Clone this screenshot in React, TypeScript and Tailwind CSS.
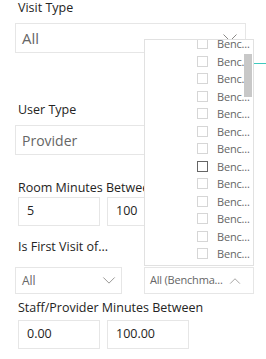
import React from 'react';

const font = { fontFamily: '"Segoe UI", "Open Sans", "Noto Sans", sans-serif' };

const ChevronDown = ({ className }: { className?: string }) => (
  <svg viewBox="0 0 14 8" className={className} fill="none" stroke="#8a8886" strokeWidth={1}>
    <path d="M0.5 0.5L7 7L13.5 0.5" />
  </svg>
);

const ChevronUp = ({ className }: { className?: string }) => (
  <svg viewBox="0 0 14 8" className={className} fill="none" stroke="#8a8886" strokeWidth={1}>
    <path d="M0.5 7.5L7 1L13.5 7.5" />
  </svg>
);

const Label = ({ children, className = '' }: { children: React.ReactNode; className?: string }) => (
  <div className={`pl-[18px] h-[18px] leading-[18px] text-[12.5px] text-[#252423] whitespace-nowrap ${className}`}>
    {children}
  </div>
);

const NumberBox = ({ value }: { value: string }) => (
  <div className="w-[82px] h-[29px] border border-[#e6e6e6] flex items-center pl-[8px] text-[12.5px] text-[#252423] bg-white">
    {value}
  </div>
);

const items = Array.from({ length: 13 }, (_, i) => i);

export default function App() {
  return (
    <div className="relative w-[266px] h-[359px] overflow-hidden bg-white" style={font}>
      {/* Visit Type */}
      <Label className="-mt-[1px]">Visit Type</Label>
      <div className="ml-[15px] mt-[6px] w-[231px] h-[30px] border border-[#e6e6e6] flex items-center justify-between pl-[6px] pr-[8px]">
        <span className="text-[15px] text-[#666666]">All</span>
        <ChevronDown className="w-[14px] h-[8px]" />
      </div>

      {/* User Type */}
      <Label className="mt-[48px]">User Type</Label>
      <div className="ml-[15px] mt-[6px] w-[231px] h-[30px] border border-[#e6e6e6] flex items-center pl-[6px]">
        <span className="text-[14px] text-[#666666]">Provider</span>
      </div>

      {/* Room Minutes Between */}
      <Label className="mt-[24px]">Room Minutes Between</Label>
      <div className="ml-[18px] flex gap-[7px]">
        <NumberBox value="5" />
        <NumberBox value="100" />
      </div>

      {/* Is First Visit of... */}
      <Label className="mt-[12px]">Is First Visit of...</Label>
      <div className="ml-[15px] mt-[11px] flex gap-[22px]">
        <div className="w-[107px] h-[27px] border border-[#e6e6e6] flex items-center justify-between pl-[6px] pr-[5px]">
          <span className="text-[12px] text-[#666666]">All</span>
          <ChevronDown className="w-[14px] h-[7px]" />
        </div>
        <div className="w-[110px] h-[27px] border border-[#e6e6e6] flex items-center gap-[6px] pl-[5px]">
          <span className="text-[11px] text-[#666666] whitespace-nowrap tracking-[-0.2px]">All (Benchma...</span>
          <ChevronUp className="w-[12px] h-[6px] shrink-0" />
        </div>
      </div>

      {/* Staff/Provider Minutes Between */}
      <Label className="mt-[5px]">Staff/Provider Minutes Between</Label>
      <div className="ml-[18px] mt-[3px] flex gap-[7px]">
        <NumberBox value="0.00" />
        <NumberBox value="100.00" />
      </div>

      {/* line from visual behind */}
      <div className="absolute left-[253px] top-[63px] w-[13px] h-px bg-[#3fc9bf]" />

      {/* dropdown popup */}
      <div className="absolute left-[144px] top-[39px] w-[110px] h-[227px] bg-white border border-[#e1e1e1]">
        <div className="relative h-[220px] overflow-hidden">
          <div className="-mt-[5px]">
            {items.map((i) => (
              <div key={i} className="h-[17.5px] flex items-center pl-[52px]">
                <span
                  className={`shrink-0 w-[11px] h-[11px] border ${i === 7 ? 'border-[#666666]' : 'border-[#d6d6d6]'}`}
                />
                <span className="ml-[9px] text-[11px] text-[#666666] leading-none whitespace-nowrap tracking-[-0.2px]">
                  Benc...
                </span>
              </div>
            ))}
          </div>
          <div className="absolute left-[99px] top-[14px] w-[8px] h-[43px] bg-[#c8c8c8]" />
        </div>
      </div>
    </div>
  );
}
